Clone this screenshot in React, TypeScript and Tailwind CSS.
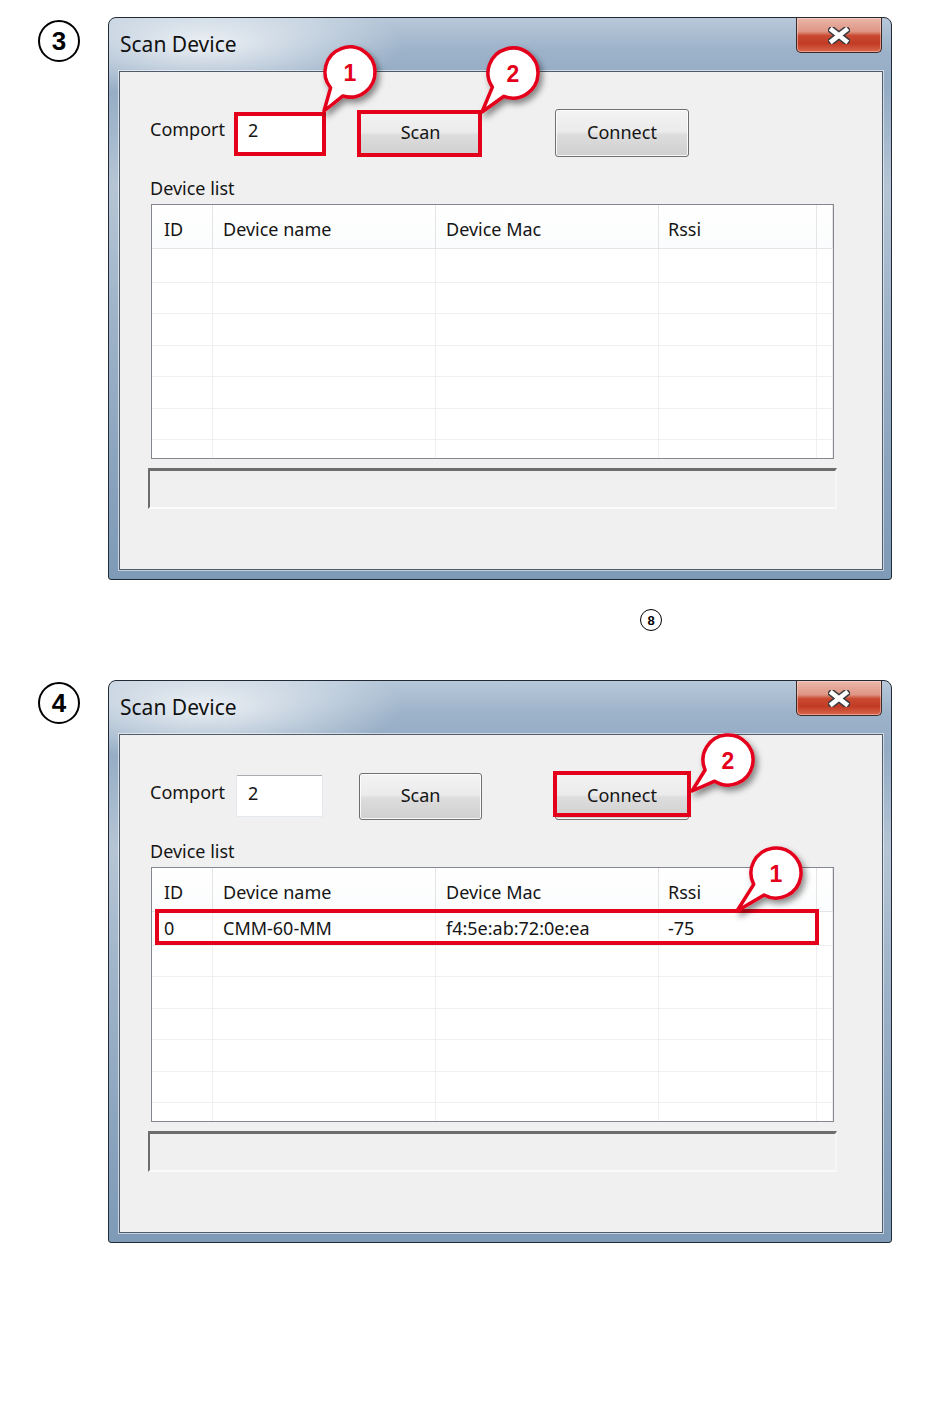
import React from "react";

const FONT = "font-['Noto_Sans','DejaVu_Sans',sans-serif]";

function Btn({ label, cls }: { label: string; cls: string }) {
  return (
    <div
      className={`${cls} flex items-center justify-center pb-[2px] rounded-[3px] border border-[#707070] bg-[linear-gradient(180deg,#f3f3f3_0%,#ebebeb_47%,#dddddd_53%,#cfcfcf_100%)] shadow-[inset_0_0_0_1px_rgba(255,255,255,0.85)] text-[18px] text-[#151515]`}
    >
      {label}
    </div>
  );
}

const COLS = ["w-[61px] pl-[12px]", "w-[223px] pl-[10px]", "w-[223px] pl-[10px]", "w-[158px] pl-[9px]", "flex-1"];
const HEADERS = ["ID", "Device name", "Device Mac", "Rssi", ""];
const ROWH = ["h-[34px]", "h-[31px]", "h-[32px]", "h-[31px]", "h-[32px]", "h-[31px]"];

function Table({ row }: { row?: string[] }) {
  return (
    <div className="ml-[31px] mt-[6px] w-[683px] h-[255px] border border-[#828790] bg-white flex flex-col overflow-hidden">
      <div className="h-[44px] shrink-0 flex border-b border-[#e5e5e5] bg-[linear-gradient(180deg,#ffffff_0%,#fbfcfd_100%)]">
        {HEADERS.map((h, i) => (
          <div key={i} className={`${COLS[i]} h-full flex items-center pt-[5px] border-r border-[#e5e5e5]`}>
            {h}
          </div>
        ))}
      </div>
      {ROWH.map((rh, r) => (
        <div key={r} className={`${rh} shrink-0 flex border-b border-[#efefef]`}>
          {COLS.map((c, i) => (
            <div key={i} className={`${c} h-full flex items-center border-r border-[#efefef]`}>
              {r === 0 && row ? row[i] ?? "" : ""}
            </div>
          ))}
        </div>
      ))}
      <div className="flex-1 flex">
        {COLS.map((c, i) => (
          <div key={i} className={`${c} h-full border-r border-[#efefef]`} />
        ))}
      </div>
    </div>
  );
}

function CloseX() {
  return (
    <svg width="22" height="17" viewBox="0 0 22 17">
      <path d="M4 3 L18 14 M18 3 L4 14" stroke="#3a3a40" strokeWidth="7.5" strokeLinecap="square" />
      <path d="M4 3 L18 14 M18 3 L4 14" stroke="#ffffff" strokeWidth="4.6" strokeLinecap="square" />
    </svg>
  );
}

function Win({ row }: { row?: string[] }) {
  return (
    <div className="relative w-[784px] h-[563px] rounded-t-[8px] rounded-b-[3px] border border-[#222b35] bg-[radial-gradient(ellipse_200px_55px_at_95px_26px,rgba(255,255,255,0.8),rgba(255,255,255,0)),linear-gradient(180deg,#b7c8d9_0%,#9cb2c9_6%,#93abc4_12%,#b5c5d5_30%,#9db2c8_55%,#87a1bc_85%,#7e9ab7_100%)] flex flex-col">
      <div className="h-[53px] shrink-0 flex items-center pl-[11px] text-[21px] text-[#111]">Scan Device</div>
      <div className="absolute top-0 right-[9px] w-[86px] h-[35px] rounded-b-[5px] border border-t-0 border-[#3a2a28] bg-[linear-gradient(180deg,#eab7ab_0%,#df9583_40%,#c94a31_52%,#c23b24_75%,#d8674d_100%)] shadow-[inset_0_0_0_1px_rgba(255,220,210,0.5)] flex items-center justify-center">
        <CloseX />
      </div>
      <div className="ml-[10px] w-[764px] h-[499px] border border-[#4f5b68] bg-[#f0f0f0] shadow-[0_0_0_1px_rgba(255,255,255,0.55)] flex flex-col text-[18px] text-[#151515]">
        <div className="mt-[36px] h-[50px] flex items-center">
          <div className="ml-[30px] w-[86px] pb-[7px]">Comport</div>
          <div className="w-[87px] h-[42px] bg-white border border-[#e3e9ef] border-t-[#abadb3] rounded-[2px] flex items-center pl-[11px] pb-[5px]">2</div>
          <Btn label="Scan" cls="ml-[36px] w-[123px] h-[47px]" />
          <Btn label="Connect" cls="ml-[73px] w-[134px] h-[48px]" />
        </div>
        <div className="mt-[20px] h-[20px] leading-[20px] ml-[30px]">Device list</div>
        <Table row={row} />
        <div className="mt-[9px] ml-[28px] w-[689px] h-[41px] border-t-[3px] border-l-[2px] border-b-2 border-r-2 border-t-[#6d6d6d] border-l-[#6d6d6d] border-b-[#fbfbfb] border-r-[#f6f6f6] bg-[#f0f0f0]" />
      </div>
    </div>
  );
}

function callout(cx: number, cy: number, r: number, tx: number, ty: number) {
  const th = Math.atan2(ty - cy, tx - cx);
  const d = 0.3;
  const a1 = th - d;
  const a2 = th + d;
  const p1 = `${(cx + r * Math.cos(a1)).toFixed(2)},${(cy + r * Math.sin(a1)).toFixed(2)}`;
  const p2 = `${(cx + r * Math.cos(a2)).toFixed(2)},${(cy + r * Math.sin(a2)).toFixed(2)}`;
  return `M${p2} L${tx},${ty} L${p1} A${r},${r} 0 1 0 ${p2} Z`;
}

const RED = "#e4001b";

function Overlay() {
  const calls = [
    { cx: 350, cy: 72, tx: 324, ty: 111, n: "1" },
    { cx: 513, cy: 73, tx: 482, ty: 112, n: "2" },
    { cx: 728, cy: 760, tx: 692, ty: 791, n: "2" },
    { cx: 776, cy: 873, tx: 737, ty: 911, n: "1" },
  ];
  const rects = [
    { x: 236, y: 114, w: 88, h: 40 },
    { x: 359, y: 112, w: 121, h: 43 },
    { x: 555, y: 773, w: 134, h: 42 },
    { x: 157, y: 911, w: 660, h: 32 },
  ];
  return (
    <svg className="absolute left-0 top-0 pointer-events-none" width="950" height="1414" viewBox="0 0 950 1414">
      <defs>
        <filter id="sh" x="-50%" y="-50%" width="200%" height="200%">
          <feDropShadow dx="3" dy="4" stdDeviation="3" floodColor="#000" floodOpacity="0.45" />
        </filter>
      </defs>
      {rects.map((r, i) => (
        <rect key={i} x={r.x} y={r.y} width={r.w} height={r.h} fill="none" stroke={RED} strokeWidth="4" />
      ))}
      {calls.map((c, i) => (
        <g key={i}>
          <path d={callout(c.cx, c.cy, 25, c.tx, c.ty)} fill="#fff" stroke={RED} strokeWidth="3.5" strokeLinejoin="round" filter="url(#sh)" />
          <text
            x={c.cx}
            y={c.cy + 1}
            textAnchor="middle"
            dominantBaseline="central"
            fontFamily="'Liberation Sans', Arial, sans-serif"
            fontWeight="bold"
            fontSize="23"
            fill={RED}
          >
            {c.n}
          </text>
        </g>
      ))}
    </svg>
  );
}

function StepNum({ n, cls }: { n: string; cls: string }) {
  return (
    <div
      className={`${cls} w-[42px] h-[42px] rounded-full border-[2.5px] border-black flex items-center justify-center font-['Liberation_Sans',Arial,sans-serif] font-bold text-[26px] text-black leading-none`}
    >
      {n}
    </div>
  );
}

export default function App() {
  return (
    <div className={`relative w-[950px] h-[1414px] bg-white ${FONT}`}>
      <div className="flex pt-[17px]">
        <div className="w-[108px] shrink-0">
          <StepNum n="3" cls="ml-[38px] mt-[3px]" />
        </div>
        <Win />
      </div>
      <div className="mt-[29px] h-[22px] flex">
        <div className="ml-[640px] w-[22px] h-[22px] rounded-full border-[1.5px] border-black flex items-center justify-center font-['Liberation_Sans',Arial,sans-serif] font-bold text-[13px] leading-none">
          8
        </div>
      </div>
      <div className="flex mt-[49px]">
        <div className="w-[108px] shrink-0">
          <StepNum n="4" cls="ml-[38px] mt-[2px]" />
        </div>
        <Win row={["0", "CMM-60-MM", "f4:5e:ab:72:0e:ea", "-75", ""]} />
      </div>
      <Overlay />
    </div>
  );
}
